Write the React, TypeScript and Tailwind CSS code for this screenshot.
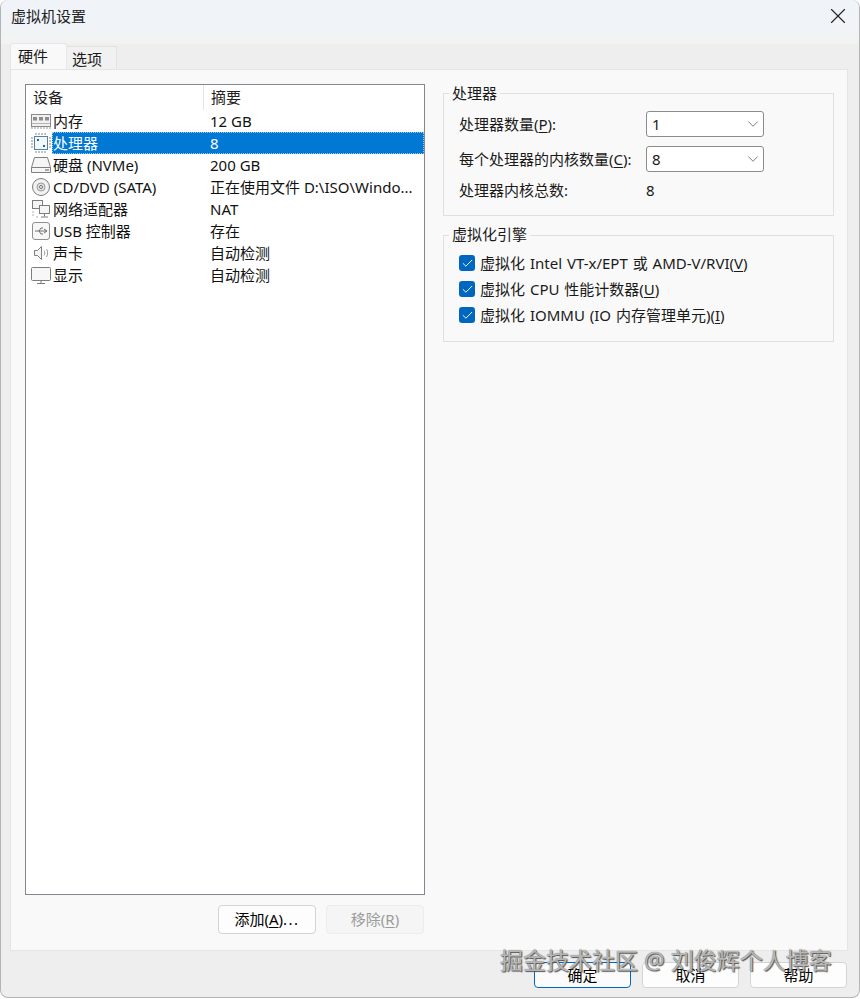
import { ChevronDown, Check, X } from "lucide-react"

const fontStack = "font-['Noto_Sans','Noto_Sans_CJK_SC',sans-serif]"

function RamIcon() {
  return (
    <svg width="22" height="16" viewBox="0 0 22 16" fill="none">
      <rect x="1.5" y="1.5" width="19" height="12" fill="#f1f1f1" stroke="#8a8a8a" />
      <rect x="3" y="4" width="4" height="3.5" fill="#8d8d8d" />
      <rect x="9" y="4" width="4" height="3.5" fill="#8d8d8d" />
      <rect x="15" y="4" width="4" height="3.5" fill="#8d8d8d" />
      <path d="M2 10.5h18" stroke="#b5b5b5" />
      <path d="M1 15h20" stroke="#9a9a9a" strokeDasharray="2 1" />
    </svg>
  )
}

function CpuIcon() {
  return (
    <svg width="20" height="20" viewBox="0 0 20 20" fill="none">
      <rect x="3.5" y="3.5" width="13" height="13" fill="#f0f8fe" stroke="#5b7f9d" />
      <rect x="6" y="6" width="2" height="2" fill="#3a5f80" />
      <rect x="12" y="12" width="2" height="2" fill="#3a5f80" />
      <path d="M0 5h2M0 8h2M0 11h2M0 14h2M18 5h2M18 8h2M18 11h2M18 14h2M5 0v2M8 0v2M11 0v2M14 0v2M5 18v2M8 18v2M11 18v2M14 18v2" stroke="#6f8ba3" />
    </svg>
  )
}

function DiskIcon() {
  return (
    <svg width="22" height="18" viewBox="0 0 22 18" fill="none">
      <path d="M4.5 1.5h13l3 10v5h-19v-5z" fill="#f5f5f5" stroke="#808080" />
      <path d="M1.5 11.5h19" stroke="#808080" />
      <path d="M15 14h4" stroke="#8a8a8a" strokeWidth="1.5" />
    </svg>
  )
}

function CdIcon() {
  return (
    <svg width="20" height="20" viewBox="0 0 20 20" fill="none">
      <circle cx="10" cy="10" r="8.5" fill="#f2f2f2" stroke="#7d7d7d" />
      <circle cx="10" cy="10" r="4" fill="#e2e2e2" stroke="#9a9a9a" />
      <circle cx="10" cy="10" r="1.5" fill="#fff" stroke="#6e6e6e" />
    </svg>
  )
}

function NetIcon() {
  return (
    <svg width="20" height="20" viewBox="0 0 20 20" fill="none">
      <rect x="1.5" y="1.5" width="10" height="8" fill="#f5f5f5" stroke="#7d7d7d" />
      <rect x="8.5" y="6.5" width="10" height="8" fill="#f5f5f5" stroke="#7d7d7d" />
      <path d="M13.5 14.5v3M10 18h7" stroke="#7d7d7d" />
      <path d="M1 13h2M1 16h2M5 18h2" stroke="#b0b0b0" />
    </svg>
  )
}

function UsbIcon() {
  return (
    <svg width="20" height="20" viewBox="0 0 20 20" fill="none">
      <rect x="1.5" y="1.5" width="17" height="17" rx="2.5" fill="#f7f7f7" stroke="#8f8f8f" />
      <path d="M4 10h12M13 8l3 2-3 2M8 10l2-3h2M8 10l2 3h2" stroke="#6f6f6f" />
    </svg>
  )
}

function SoundIcon() {
  return (
    <svg width="20" height="18" viewBox="0 0 20 18" fill="none">
      <path d="M3.5 6.5h3l4-4v13l-4-4h-3z" fill="#f4f4f4" stroke="#808080" />
      <path d="M13 6.5c1 1.5 1 3.500 0 5M15.500 5c1.500 2.500 1.500 5.500 0 8" stroke="#9a9a9a" />
    </svg>
  )
}

function MonitorIcon() {
  return (
    <svg width="22" height="20" viewBox="0 0 22 20" fill="none">
      <rect x="1.500" y="2.500" width="19" height="13" rx="1" fill="#f7f7f7" stroke="#7d7d7d" />
      <path d="M7 18.500h8M11 16v2" stroke="#7d7d7d" />
    </svg>
  )
}

const devices = [
  { icon: <RamIcon />, name: "内存", summary: "12 GB" },
  { icon: <CpuIcon />, name: "处理器", summary: "8", selected: true },
  { icon: <DiskIcon />, name: "硬盘 (NVMe)", summary: "200 GB" },
  { icon: <CdIcon />, name: "CD/DVD (SATA)", summary: "正在使用文件 D:\\ISO\\Windo..." },
  { icon: <NetIcon />, name: "网络适配器", summary: "NAT" },
  { icon: <UsbIcon />, name: "USB 控制器", summary: "存在" },
  { icon: <SoundIcon />, name: "声卡", summary: "自动检测" },
  { icon: <MonitorIcon />, name: "显示", summary: "自动检测" },
]

function DeviceRow({ icon, name, summary, selected }: { icon: React.ReactNode; name: string; summary: string; selected?: boolean }) {
  return (
    <div className="flex h-[22px] items-center">
      <div className="flex w-[26px] shrink-0 justify-center pl-[3px]">{icon}</div>
      <div className={`flex h-[22px] flex-1 items-center ${selected ? "bg-[#0078d4] text-white outline-1 -outline-offset-1 outline-[#9cc8ea] outline-dotted" : "text-[#111]"}`}>
        <span className="w-[158px] pl-[1px] whitespace-nowrap">{name}</span>
        <span className="whitespace-nowrap">{summary}</span>
      </div>
    </div>
  )
}

function Combo({ value }: { value: string }) {
  return (
    <div className="flex h-[26px] w-[118px] items-center justify-between rounded-[3px] border border-[#8c8c8c] bg-white pr-[1px] pl-[5px]">
      <span>{value}</span>
      <ChevronDown size={18} strokeWidth={1} color="#555" />
    </div>
  )
}

function CheckRow({ children }: { children: React.ReactNode }) {
  return (
    <div className="flex h-[26px] items-center gap-[5px]">
      <div className="flex h-[16px] w-[16px] items-center justify-center rounded-[3px] bg-[#0067c0]">
        <Check size={13} strokeWidth={1.75} color="white" />
      </div>
      <span className="whitespace-nowrap [word-spacing:1px]">{children}</span>
    </div>
  )
}

function Key({ children }: { children: React.ReactNode }) {
  return <span className="underline underline-offset-2">{children}</span>
}

function Button({ children, primary, disabled, footer }: { children: React.ReactNode; primary?: boolean; disabled?: boolean; footer?: boolean }) {
  const tone = disabled
    ? "border-[#ececec] bg-[#f5f5f5] text-[#9b9b9b]"
    : primary
      ? "border-[#0067c0] bg-[#fbfbfb] text-black"
      : "border-[#d4d4d4] bg-[#fdfdfd] text-black"
  return (
    <div className={`flex items-center justify-center rounded-[4px] border ${footer ? "h-[26px] w-[97px]" : "h-[29px] w-[98px]"} ${tone}`}>{children}</div>
  )
}

export default function App() {
  return (
    <div className={`relative h-[999px] w-[860px] overflow-hidden bg-white text-[15px] leading-none text-[#1a1a1a] ${fontStack}`}>
      <div className="flex h-[998px] w-[860px] flex-col rounded-lg border border-t-0 border-[#b4b4b4] bg-[#eeeeee]">
        {/* title bar */}
        <div className="h-[44px] shrink-0 rounded-t-lg bg-gradient-to-b from-[#f0f4f9] via-[#f0f4f9] to-[#f2f2f1]">
          <div className="flex items-center justify-between pt-[3px] pr-[8px] pl-[10px]">
            <span className="text-[#222]">虚拟机设置</span>
            <X size={26} strokeWidth={1} color="#222" />
          </div>
        </div>

        {/* tabs */}
        <div className="flex h-[25px] shrink-0 items-end pl-[9px]">
          <div className="z-10 flex h-[26px] w-[57px] items-center rounded-t-[3px] border border-b-0 border-[#e6e6e6] bg-[#f9f9f9] pl-[7px]">硬件</div>
          <div className="flex h-[23px] w-[50px] items-center border border-b-0 border-l-0 border-[#e2e2e2] bg-[#f1f1f1] pt-[2px] pl-[5px]">选项</div>
        </div>

        {/* tab panel */}
        <div className="mr-[11px] ml-[9px] flex h-[882px] shrink-0 gap-[18px] border border-[#e5e5e5] bg-[#f9f9f9] pt-[14px] pr-[13px] pl-[14px]">
          <div className="flex w-[400px] shrink-0 flex-col">
            <div className="h-[811px] border border-[#828790] bg-white">
              <div className="flex h-[25px] items-center text-[#222]">
                <div className="flex h-[25px] w-[178px] items-center border-r border-[#e5e5e5] pl-[7px]">设备</div>
                <div className="pl-[7px]">摘要</div>
              </div>
              {devices.map((d) => (
                <DeviceRow key={d.name} {...d} />
              ))}
            </div>
            <div className="mt-[10px] flex justify-end gap-[10px] pr-[1px]">
              <Button>
                <span>添加(<Key>A</Key>)<span className="tracking-[1.5px]">...</span></span>
              </Button>
              <Button disabled>
                <span>移除(<Key>R</Key>)</span>
              </Button>
            </div>
          </div>

          <div className="flex flex-1 flex-col gap-[19px] pt-[9px]">
            <div className="relative h-[123px] border border-[#e0e0e0] px-[15px] pt-[17px]">
              <span className="absolute -top-[8px] left-[5px] bg-[#f9f9f9] px-[3px]">处理器</span>
              <div className="flex h-[26px] items-center">
                <span className="w-[187px] whitespace-nowrap">处理器数量(<Key>P</Key>):</span>
                <Combo value="1" />
              </div>
              <div className="mt-[9px] flex h-[26px] items-center">
                <span className="w-[187px] whitespace-nowrap">每个处理器的内核数量(<Key>C</Key>):</span>
                <Combo value="8" />
              </div>
              <div className="mt-[5px] flex h-[26px] items-center">
                <span className="w-[187px] whitespace-nowrap">处理器内核总数:</span>
                <span>8</span>
              </div>
            </div>

            <div className="relative h-[107px] border border-[#e0e0e0] px-[15px] pt-[14px]">
              <span className="absolute -top-[9px] left-[5px] bg-[#f9f9f9] px-[3px]">虚拟化引擎</span>
              <CheckRow>虚拟化 Intel VT-x/EPT 或 AMD-V/RVI(<Key>V</Key>)</CheckRow>
              <CheckRow>虚拟化 CPU 性能计数器(<Key>U</Key>)</CheckRow>
              <CheckRow>虚拟化 IOMMU (IO 内存管理单元)(<Key>I</Key>)</CheckRow>
            </div>
          </div>
        </div>

        {/* footer */}
        <div className="mt-[11px] flex justify-end gap-[11px] pr-[12px]">
          <Button footer primary>确定</Button>
          <Button footer>取消</Button>
          <Button footer>帮助</Button>
        </div>
      </div>

      {/* watermark */}
      <div className="absolute top-[947px] left-[500px] text-[23px] leading-[26px] whitespace-nowrap text-[#e8e8e8b0] [text-shadow:0_0_1px_#444,1px_1px_1px_#555]">
        掘金技术社区 @ 刘俊辉个人博客
      </div>
    </div>
  )
}
